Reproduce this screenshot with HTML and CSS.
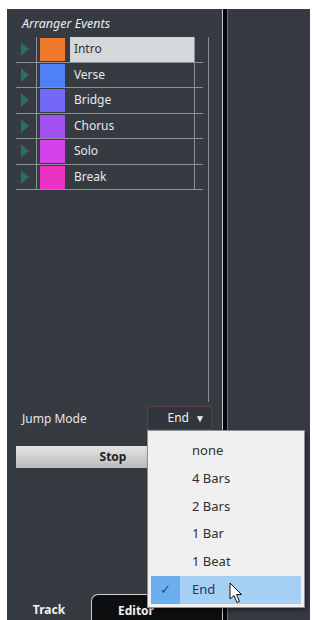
FILE: index.html
```html
<!DOCTYPE html>
<html lang="en">
<head>
    <meta charset="UTF-8">
    <meta name="viewport" content="width=device-width, initial-scale=1.0">
    <title>Arranger Events</title>
    <link rel="stylesheet" href="styles.css">
</head>
<body>

<div class="window">
    <div class="inspector">
        <div class="section-title">Arranger Events</div>

        <div class="events">
            <div class="event-list">
                <div class="event selected">
                    <span class="play"></span>
                    <span class="cell"><span class="swatch intro"></span></span>
                    <span class="name">Intro</span>
                    <span class="tail"></span>
                </div>
                <div class="event">
                    <span class="play"></span>
                    <span class="cell"><span class="swatch verse"></span></span>
                    <span class="name">Verse</span>
                    <span class="tail"></span>
                </div>
                <div class="event">
                    <span class="play"></span>
                    <span class="cell"><span class="swatch bridge"></span></span>
                    <span class="name">Bridge</span>
                    <span class="tail"></span>
                </div>
                <div class="event">
                    <span class="play"></span>
                    <span class="cell"><span class="swatch chorus"></span></span>
                    <span class="name">Chorus</span>
                    <span class="tail"></span>
                </div>
                <div class="event">
                    <span class="play"></span>
                    <span class="cell"><span class="swatch solo"></span></span>
                    <span class="name">Solo</span>
                    <span class="tail"></span>
                </div>
                <div class="event">
                    <span class="play"></span>
                    <span class="cell"><span class="swatch break"></span></span>
                    <span class="name">Break</span>
                    <span class="tail"></span>
                </div>
            </div>
            <div class="scroll-track"></div>
        </div>

        <div class="jump-row">
            <span class="jump-label">Jump Mode</span>
            <div class="jump-select">End <span class="arrow">&#9660;</span></div>
        </div>

        <div class="stop-btn">Stop</div>

        <div class="tabs">
            <div class="tab">Track</div>
            <div class="tab active">Editor</div>
        </div>
    </div>

    <div class="divider"></div>
    <div class="project"></div>

    <!-- open popup of the jump mode selector -->
    <div class="menu">
        <div class="menu-item">none</div>
        <div class="menu-item">4 Bars</div>
        <div class="menu-item">2 Bars</div>
        <div class="menu-item">1 Bar</div>
        <div class="menu-item">1 Beat</div>
        <div class="menu-item checked"><span class="check">&#10003;</span>End</div>
    </div>

    <svg class="cursor" width="14" height="22" viewBox="0 0 14 22">
        <path d="M1 1 L1 17 L5 13.5 L8 20.5 L10.5 19.5 L7.5 12.5 L12.5 12.5 Z" fill="#fff" stroke="#111" stroke-width="1" stroke-linejoin="round"/>
    </svg>
</div>

</body>
</html>
```

FILE: styles.css
```css
body {
    margin: 0;
    background: #fff;
    font-family: "Noto Sans", "Open Sans", sans-serif;
    font-size: 12px;
}

.window {
    position: relative;
    display: flex;
    height: 611px;
    margin: 9px 2px 0 7px;
}

.inspector {
    width: 215px;
    background: #363b42;
    display: flex;
    flex-direction: column;
}

.section-title {
    height: 28px;
    line-height: 30px;
    padding-left: 15px;
    color: #eceef2;
    font-style: italic;
    font-size: 12.5px;
}

/* event list + thin scroll line */
.events {
    display: flex;
    height: 365px;
    padding-left: 9px;
}
.event-list {
    width: 187px;
}
.scroll-track {
    width: 1px;
    margin-left: 5px;
    background: #868b92;
}

.event {
    display: flex;
    height: 24.5px;
    border-bottom: 1px solid #8b9096;
}
.play {
    width: 20px;
    border-right: 1px solid #8b9096;
    position: relative;
}
.play::after {
    content: "";
    position: absolute;
    left: 5px;
    top: 5px;
    border-left: 8px solid #2c6d66;
    border-top: 7px solid transparent;
    border-bottom: 7px solid transparent;
}
.cell {
    width: 31px;
    padding: 1px 0 0 3px;
}
.swatch {
    display: block;
    width: 25px;
    height: 23px;
}
.intro  { background: #f07a2c; }
.verse  { background: #4f80f6; }
.bridge { background: #7469f6; }
.chorus { background: #a451f1; }
.solo   { background: #d342ea; }
.break  { background: #ea33c2; }

.name {
    width: 123px;
    padding-left: 4px;
    line-height: 24px;
    color: #e6e8ea;
}
.selected .name {
    background: #d5d7da;
    color: #30343a;
}
.tail {
    width: 8px;
    border-left: 1px solid #8b9096;
}

.jump-row {
    display: flex;
    align-items: center;
    justify-content: space-between;
    height: 24px;
    margin-top: 4px;
    padding: 0 10px 0 15px;
    color: #e4e6ea;
}
.jump-select {
    width: 57px;
    height: 22px;
    line-height: 22px;
    padding-right: 6px;
    text-align: right;
    border: 1px solid #5b4048;
    background: #31353c;
    color: #f0f0f0;
}
.arrow {
    font-size: 10px;
    margin-left: 3px;
}

.stop-btn {
    height: 22px;
    line-height: 22px;
    margin: 16px 12px 0 9px;
    background: linear-gradient(#e4e5e6, #b9bbbd);
    color: #222;
    font-weight: bold;
    text-align: center;
}

.tabs {
    display: flex;
    margin-top: auto;
    height: 26px;
}
.tab {
    width: 84px;
    line-height: 31px;
    text-align: center;
    color: #f2f2f2;
    font-weight: bold;
}
.tab.active {
    flex: 1;
    text-align: left;
    padding-left: 26px;
    background: #0d0e10;
    border-top: 1px solid #cfd1d4;
    border-left: 1px solid #cfd1d4;
    border-radius: 7px 0 0 0;
}

.divider {
    width: 4px;
    background: #050607;
    border-left: 1px solid #c3c6ca;
    border-right: 1px solid #6a6e74;
}
.project {
    flex: 1;
    background: #353a42;
}

.menu {
    position: absolute;
    left: 140px;
    top: 421px;
    width: 150px;
    padding: 6px 3px 3px;
    background: #f0f0f0;
    border: 1px solid #8e9094;
    box-shadow: 2px 3px 4px rgba(0, 0, 0, 0.35);
}
.menu-item {
    position: relative;
    height: 27.8px;
    line-height: 27.8px;
    padding-left: 41px;
    color: #2e2e2e;
    font-size: 13px;
}
.menu-item.checked {
    background: #a6cff4;
    color: #1c3760;
}
.check {
    position: absolute;
    left: 0;
    top: 0;
    width: 29px;
    height: 100%;
    background: #6aaeee;
    color: #1d4d8a;
    text-align: center;
    font-size: 13px;
}

.cursor {
    position: absolute;
    left: 222px;
    top: 573px;
}
```
